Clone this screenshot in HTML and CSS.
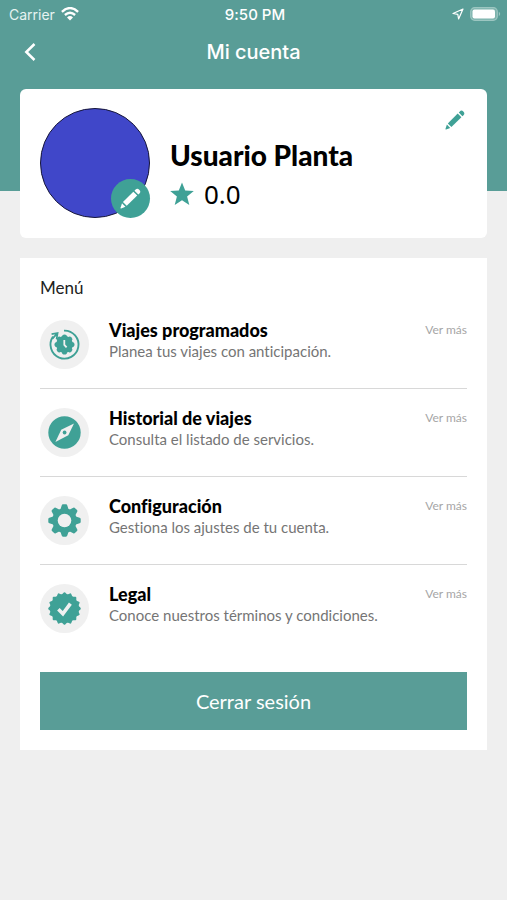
FILE: index.html
```html
<!DOCTYPE html>
<html lang="es">
<head>
<meta charset="utf-8">
<meta name="viewport" content="width=device-width, initial-scale=1">
<title>Mi cuenta</title>
<link rel="stylesheet" href="styles.css">
</head>
<body>
<svg class="sprite" aria-hidden="true">
  <symbol id="pencil" viewBox="0 0 20 20">
    <path d="M14.6 1.7 Q16.5-.4 18.3 1.6 Q20.4 3.6 18.3 5.4 L17.4 6.2 L13.8 2.5 Z"/>
    <path d="M12.7 3.5 L16.4 7.2 L6.4 17 L2.8 13.4 Z"/>
    <path d="M1.9 14.6 L5.2 17.9 L1.1 19.5 Q.2 19.7.5 18.8 Z"/>
  </symbol>
</svg>
<header class="top">
  <div class="status">
    <div class="status-side">
      <span class="carrier">Carrier</span>
      <svg width="18" height="14" viewBox="0 0 18 14" fill="none" stroke="#fff" stroke-width="2.4" aria-hidden="true">
        <path d="M.9 4.8 Q9-2.6 17.1 4.8"/>
        <path d="M3.9 8 Q9 3.6 14.1 8"/>
        <path d="M6 10.4 Q9 7.8 12 10.4 L9 13.6 Z" fill="#fff" stroke="none"/>
      </svg>
    </div>
    <time class="clock">9:50 PM</time>
    <div class="status-side status-end">
      <svg width="12" height="12" viewBox="0 0 12 12" fill="none" stroke="#fff" stroke-width="1.2" stroke-linejoin="round" aria-hidden="true">
        <path d="M11 1 L6.6 11 L5.8 6.3 L1 5.5 Z"/>
      </svg>
      <svg width="31" height="14" viewBox="0 0 31 14" aria-hidden="true">
        <rect x=".7" y=".7" width="26.6" height="12.6" rx="4" fill="#7db3ad" stroke="#9cc6c1" stroke-width="1.2"/>
        <rect x="2.5" y="2.5" width="22.5" height="9" rx="2" fill="#fff"/>
        <path d="M28.8 4.8 Q31.6 7 28.8 9.2 Z" fill="#9cc6c1"/>
      </svg>
    </div>
  </div>
  <nav class="nav">
    <button class="icon-button back" type="button" aria-label="Volver">
      <svg width="12" height="18" viewBox="0 0 12 18" fill="none" stroke="#fff" stroke-width="2.5" aria-hidden="true"><path d="M10.5 1 L2.3 9 L10.5 17"/></svg>
    </button>
    <h1 class="title">Mi cuenta</h1>
  </nav>
</header>
<main class="content">
  <section class="card profile">
    <div class="avatar">
      <button class="icon-button avatar-edit" type="button" aria-label="Cambiar foto">
        <svg width="21" height="21" aria-hidden="true"><use href="#pencil"/></svg>
      </button>
    </div>
    <div class="identity">
      <h2 class="name">Usuario Planta</h2>
      <div class="rating">
        <svg width="24" height="24" viewBox="0 0 24 24" aria-hidden="true"><path d="M12 .5 L15.2 8.6 L23.8 9.1 L17.1 14.6 L19.3 23 L12 18.3 L4.7 23 L6.9 14.6 L.2 9.1 L8.8 8.6 Z"/></svg>
        <span class="score">0.0</span>
      </div>
    </div>
    <button class="icon-button profile-edit" type="button" aria-label="Editar perfil">
      <svg width="20" height="20" aria-hidden="true"><use href="#pencil"/></svg>
    </button>
  </section>
  <section class="card menu">
    <h2 class="menu-title">Menú</h2>
    <ul class="list">
      <li class="row">
        <svg class="badge" viewBox="0 0 49 49" aria-hidden="true">
          <path d="M24 10.6 A14 14 0 1 1 13 16.6" fill="none" stroke="#3fa196" stroke-width="1.9"/>
          <path d="M11.6 14.2 L17.6 13 L16.6 19.2 M17.2 13.4 L12.5 18.6" fill="none" stroke="#3fa196" stroke-width="1.7"/>
          <circle cx="24.5" cy="24.5" r="8.4"/>
          <g id="lobes"><circle cx="24.5" cy="17.1" r="2.6"/><circle cx="24.5" cy="31.9" r="2.6"/><circle cx="17.1" cy="24.5" r="2.6"/><circle cx="31.9" cy="24.5" r="2.6"/></g>
          <use href="#lobes" transform="rotate(45 24.5 24.5)"/>
          <path d="M24.3 20 V24.8 L26.6 27.4" fill="none" stroke="#f0f0f0" stroke-width="1.8"/>
        </svg>
        <div class="row-text">
          <h3 class="row-title">Viajes programados</h3>
          <p class="row-sub">Planea tus viajes con anticipación.</p>
        </div>
        <a class="more" href="#viajes">Ver más</a>
      </li>
      <li class="row">
        <svg class="badge" viewBox="0 0 49 49" aria-hidden="true">
          <circle cx="24.5" cy="24.5" r="16.2"/>
          <path d="M34 15.4 L28.3 27.3 L15.4 34 L21.2 21.8 Z" fill="#f0f0f0"/>
          <circle cx="24.6" cy="24.5" r="1.9"/>
        </svg>
        <div class="row-text">
          <h3 class="row-title">Historial de viajes</h3>
          <p class="row-sub">Consulta el listado de servicios.</p>
        </div>
        <a class="more" href="#historial">Ver más</a>
      </li>
      <li class="row">
        <svg class="badge" viewBox="0 0 49 49" aria-hidden="true">
          <circle cx="24.5" cy="24.5" r="12.2"/>
          <g id="teeth">
            <path d="M20.2 14 L21.7 9.4 Q22 8.3 23 8.3 H26 Q27 8.3 27.3 9.4 L28.8 14 V35 L27.3 39.6 Q27 40.7 26 40.7 H23 Q22 40.7 21.7 39.6 L20.2 35 Z"/>
            <path d="M14 20.2 L9.4 21.7 Q8.3 22 8.3 23 V26 Q8.3 27 9.4 27.3 L14 28.8 H35 L39.6 27.3 Q40.7 27 40.7 26 V23 Q40.7 22 39.6 21.7 L35 20.2 Z"/>
          </g>
          <use href="#teeth" transform="rotate(45 24.5 24.5)"/>
          <circle cx="24.5" cy="24.5" r="6.8" fill="#f0f0f0"/>
        </svg>
        <div class="row-text">
          <h3 class="row-title">Configuración</h3>
          <p class="row-sub">Gestiona los ajustes de tu cuenta.</p>
        </div>
        <a class="more" href="#configuracion">Ver más</a>
      </li>
      <li class="row">
        <svg class="badge" viewBox="0 0 49 49" aria-hidden="true">
          <circle cx="24.5" cy="24.5" r="14.3"/>
          <rect id="seal" x="12.7" y="12.7" width="23.6" height="23.6" rx="1"/>
          <use href="#seal" transform="rotate(22.5 24.5 24.5)"/>
          <use href="#seal" transform="rotate(45 24.5 24.5)"/>
          <use href="#seal" transform="rotate(67.5 24.5 24.5)"/>
          <path d="M18.4 25.2 L22.9 29.8 L30.4 19.6" fill="none" stroke="#f0f0f0" stroke-width="3.6"/>
        </svg>
        <div class="row-text">
          <h3 class="row-title">Legal</h3>
          <p class="row-sub">Conoce nuestros términos y condiciones.</p>
        </div>
        <a class="more" href="#legal">Ver más</a>
      </li>
    </ul>
    <button class="logout" type="button">Cerrar sesión</button>
  </section>
</main>
</body>
</html>
```
FILE: styles.css
```css
* {
  box-sizing: border-box;
  margin: 0;
  padding: 0;
}

body {
  background: #efefef;
  color: #000;
  font-family: Lato, "Liberation Sans", sans-serif;
  font-variant-ligatures: none;
}

svg {
  display: block;
  flex: none;
}

.sprite {
  position: absolute;
  width: 0;
  height: 0;
}

.top {
  padding-bottom: 115px;
  background: #599d97;
  color: #fff;
  font-family: Inter, "Liberation Sans", sans-serif;
}

.status {
  display: grid;
  grid-template-columns: 1fr auto 1fr;
  align-items: center;
  height: 28px;
  padding: 0 6px 0 9px;
}

.status-side {
  display: flex;
  align-items: center;
  gap: 6px;
}

.status-end {
  justify-content: flex-end;
}

.carrier {
  color: #e6f3f1;
  font-size: 14px;
}

.clock {
  font-size: 15px;
  font-weight: 500;
}

.nav {
  display: grid;
  grid-template-columns: 48px 1fr 48px;
  align-items: center;
  height: 48px;
}

.title {
  font-size: 20px;
  font-weight: 500;
  text-align: center;
}

.icon-button {
  display: grid;
  place-items: center;
  border: 0;
  background: none;
  cursor: pointer;
}

.back {
  height: 48px;
  padding-left: 12px;
}

.content {
  display: grid;
  gap: 20px;
  margin-top: -102px;
  padding: 0 20px 20px;
}

.card {
  background: #fff;
}

.profile {
  display: flex;
  align-items: flex-start;
  gap: 20px;
  padding: 19px 20px 20px;
  border-radius: 6px;
}

.avatar {
  position: relative;
  flex: none;
  width: 110px;
  height: 110px;
  border: 1px solid #15153a;
  border-radius: 50%;
  background: #4047c9;
}

.avatar-edit {
  position: absolute;
  right: -1px;
  bottom: -1px;
  width: 39px;
  height: 39px;
  border-radius: 50%;
  background: #3fa196;
  fill: #fff;
}

.identity {
  flex: 1;
  padding-top: 29px;
}

.name {
  font-size: 28px;
  font-weight: 900;
  line-height: 36px;
}

.rating {
  display: flex;
  align-items: center;
  gap: 10px;
  margin-top: 3px;
  fill: #3fa196;
}

.score {
  font-family: "Noto Sans", sans-serif;
  font-size: 26px;
  line-height: 36px;
}

.profile-edit {
  padding: 2px;
  fill: #3fa196;
}

.menu {
  padding: 20px;
}

.menu-title {
  color: #222;
  font-size: 17px;
  font-weight: 400;
  line-height: 20px;
}

.list {
  margin-top: 3px;
  list-style: none;
}

.row {
  display: flex;
  align-items: flex-start;
  gap: 20px;
  padding: 19px 0;
  border-bottom: 1px solid #d8d8d8;
}

.row:last-child {
  border-bottom: 0;
}

.badge {
  width: 49px;
  height: 49px;
  border-radius: 50%;
  background: #f0f0f0;
  fill: #3fa196;
}

.row-text {
  flex: 1;
}

.row-title {
  font-size: 18px;
  font-weight: 900;
  line-height: 20px;
}

.row-sub {
  color: #757575;
  font-size: 15px;
  line-height: 22px;
}

.more {
  color: #a6a6a6;
  font-size: 12px;
  line-height: 20px;
  text-decoration: none;
}

.logout {
  display: block;
  width: 100%;
  height: 58px;
  margin-top: 20px;
  border: 0;
  background: #599d97;
  color: #fff;
  font-family: inherit;
  font-size: 20px;
  cursor: pointer;
}
```
